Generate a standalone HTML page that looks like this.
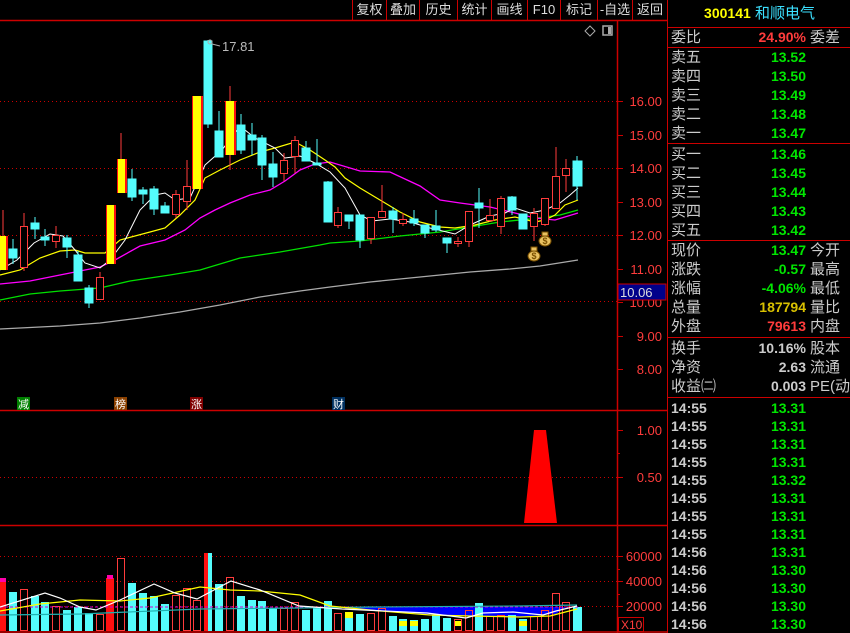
<!DOCTYPE html>
<html><head><meta charset="utf-8"><style>
*{margin:0;padding:0;box-sizing:border-box}
body{width:850px;height:633px;background:#000;overflow:hidden;position:relative;font-family:"Liberation Sans","Noto Sans CJK SC",sans-serif}
.tb{position:absolute;top:0;height:20px;border-left:1px solid #c00;color:#ddd;font-size:13px;line-height:20px;text-align:center}
.rp{position:absolute;left:667px;top:0;width:183px;height:633px;border-left:1px solid #c00}
.r{position:absolute;left:3px;width:180px;height:19px;font-size:15px;line-height:19px;color:#ccc}
.r .v{position:absolute;right:45px;top:0;font-weight:bold;font-size:14px}
.r .l2{position:absolute;left:139px;top:0}
.hl{position:absolute;left:0;width:183px;height:1px;background:#c00}
.t{position:absolute;left:3px;width:180px;height:18px;font-size:14px;line-height:18px;color:#ccc;font-weight:bold}
.t .v{position:absolute;right:45px;top:0;color:#00e600}
.g{color:#00e600}.rd{color:#ff3c3c}.y{color:#d8c000}.w{color:#ccc}
</style></head><body>
<svg width="667" height="633" style="position:absolute;left:0;top:0" xmlns="http://www.w3.org/2000/svg">
<g stroke="#c00" stroke-width="1" stroke-dasharray="1,3">
<line x1="0" y1="101.5" x2="617" y2="101.5"/><line x1="0" y1="168.5" x2="617" y2="168.5"/><line x1="0" y1="235.5" x2="617" y2="235.5"/><line x1="0" y1="301.5" x2="617" y2="301.5"/>
<line x1="0" y1="477.5" x2="617" y2="477.5"/>
<line x1="0" y1="556.5" x2="617" y2="556.5"/><line x1="0" y1="581.5" x2="617" y2="581.5"/><line x1="0" y1="606.5" x2="617" y2="606.5"/>
</g>
<g stroke="#c00" stroke-width="1.5">
<line x1="0" y1="20.5" x2="667" y2="20.5"/><line x1="0" y1="410.5" x2="667" y2="410.5"/><line x1="0" y1="525.5" x2="667" y2="525.5"/><line x1="0" y1="632" x2="667" y2="632"/>
<line x1="617.5" y1="20" x2="617.5" y2="633"/>
</g>
<g stroke="#c00">
<line x1="617" y1="101.5" x2="623" y2="101.5"/><line x1="617" y1="135.5" x2="623" y2="135.5"/><line x1="617" y1="168.5" x2="623" y2="168.5"/><line x1="617" y1="202.5" x2="623" y2="202.5"/><line x1="617" y1="235.5" x2="623" y2="235.5"/><line x1="617" y1="269.5" x2="623" y2="269.5"/><line x1="617" y1="302.5" x2="623" y2="302.5"/><line x1="617" y1="336.5" x2="623" y2="336.5"/><line x1="617" y1="369.5" x2="623" y2="369.5"/>
<line x1="617" y1="430.5" x2="623" y2="430.5"/><line x1="617" y1="453.5" x2="620" y2="453.5"/><line x1="617" y1="477.5" x2="623" y2="477.5"/>
<line x1="617" y1="556.5" x2="623" y2="556.5"/><line x1="617" y1="569.5" x2="620" y2="569.5"/><line x1="617" y1="581.5" x2="623" y2="581.5"/><line x1="617" y1="594.5" x2="620" y2="594.5"/><line x1="617" y1="606.5" x2="623" y2="606.5"/>
</g>
<g fill="#ff3c3c" font-size="13" font-family="Liberation Sans,sans-serif" text-anchor="end">
<text x="662" y="106">16.00</text><text x="662" y="140">15.00</text><text x="662" y="173">14.00</text><text x="662" y="207">13.00</text><text x="662" y="240">12.00</text><text x="662" y="274">11.00</text><text x="662" y="307">10.00</text><text x="662" y="341">9.00</text><text x="662" y="374">8.00</text>
<text x="662" y="435">1.00</text><text x="662" y="482">0.50</text>
<text x="662" y="561">60000</text><text x="662" y="586">40000</text><text x="662" y="611">20000</text>
</g>
<rect x="618" y="284" width="48" height="16" fill="#00008a" stroke="#c00"/>
<text x="620" y="297" fill="#ddd" font-size="13">10.06</text>
<rect x="618.5" y="617.5" width="25" height="14" fill="#000" stroke="#c00"/>
<text x="621" y="629" fill="#ff3c3c" font-size="12">X10</text>
<!-- icons -->
<path d="M590 26 L595 31 L590 36 L585 31 Z" fill="none" stroke="#aaa"/>
<rect x="603" y="26" width="9" height="9" fill="none" stroke="#aaa" stroke-width="1.5"/><rect x="608" y="27" width="3" height="7" fill="#aaa"/>
<!-- MA lines -->
<polyline fill="none" stroke="#aaa" stroke-width="1.3" points="0,329 60,326 100,323 140,318 180,312 220,305 260,297 300,291 330,287 370,282 420,277 470,272 510,269 540,266 578,260"/>
<polyline fill="none" stroke="#00e000" stroke-width="1.3" points="0,300 30,294 60,291 100,288 130,281 170,275 200,270 240,258 280,252 320,245 330,243 360,241 400,236 440,232 470,227 500,222 530,219 560,215 578,210"/>
<polyline fill="none" stroke="#ff00ff" stroke-width="1.3" points="0,284 30,281 55,276 75,272 100,267 115,260 140,246 165,240 185,230 200,218 215,210 230,203 250,195 270,190 285,181 300,170 315,164 330,162 360,171 390,172 420,186 440,200 460,203 490,207 515,213 535,218 555,220 578,213"/>
<polyline fill="none" stroke="#ffff00" stroke-width="1.2" points="0,275 20,270 40,258 60,251 75,250 85,253 105,253 120,240 150,232 165,228 180,215 195,200 205,178 220,170 240,160 260,152 275,148 295,142 310,150 325,160 335,167 345,178 360,188 380,200 400,212 420,222 440,227 455,228 475,225 495,220 515,217 535,222 545,220 555,215 565,205 578,200"/>
<polyline fill="none" stroke="#fff" stroke-width="1" points="0,270 17,260 34,243 50,234 63,236 75,250 85,263 100,268 110,260 125,240 140,210 155,195 165,193 175,200 190,198 205,165 222,150 240,126 255,138 275,148 285,158 300,156 315,163 330,172 345,188 360,215 372,221 390,219 410,222 430,228 455,234 470,225 490,216 505,213 515,208 530,213 545,210 560,203 570,195 578,188"/>
<!-- candles -->
<g stroke-width="1">
<g stroke="#54fcfc" fill="#54fcfc">
<line x1="13" y1="239" x2="13" y2="264"/><rect x="9" y="249" width="8" height="9"/>
<line x1="35" y1="217" x2="35" y2="239"/><rect x="31" y="223" width="8" height="6"/>
<line x1="45" y1="229" x2="45" y2="246"/><rect x="41" y="237" width="8" height="3"/>
<line x1="67" y1="235" x2="67" y2="258"/><rect x="63" y="238" width="8" height="9"/>
<line x1="78" y1="251" x2="78" y2="281"/><rect x="74" y="255" width="8" height="26"/>
<line x1="89" y1="285" x2="89" y2="308"/><rect x="85" y="288" width="8" height="15"/>
<line x1="132" y1="169" x2="132" y2="201"/><rect x="128" y="179" width="8" height="18"/>
<line x1="143" y1="187" x2="143" y2="204"/><rect x="139" y="190" width="8" height="4"/>
<line x1="154" y1="186" x2="154" y2="215"/><rect x="150" y="189" width="8" height="20"/>
<line x1="165" y1="202" x2="165" y2="213"/><rect x="161" y="206" width="8" height="7"/>
<line x1="208" y1="40" x2="208" y2="128"/><rect x="204" y="41" width="8" height="83"/>
<line x1="219" y1="111" x2="219" y2="157"/><rect x="215" y="131" width="8" height="26"/>
<line x1="241" y1="114" x2="241" y2="154"/><rect x="237" y="125" width="8" height="25"/>
<line x1="252" y1="123" x2="252" y2="155"/><rect x="248" y="135" width="8" height="5"/>
<line x1="262" y1="135" x2="262" y2="180"/><rect x="258" y="138" width="8" height="27"/>
<line x1="273" y1="152" x2="273" y2="187"/><rect x="269" y="164" width="8" height="13"/>
<line x1="306" y1="141" x2="306" y2="161"/><rect x="302" y="148" width="8" height="13"/>
<line x1="317" y1="139" x2="317" y2="165"/><rect x="313" y="163" width="8" height="2"/>
<line x1="328" y1="181" x2="328" y2="222"/><rect x="324" y="182" width="8" height="40"/>
<line x1="349" y1="215" x2="349" y2="229"/><rect x="345" y="215" width="8" height="6"/>
<line x1="360" y1="215" x2="360" y2="248"/><rect x="356" y="215" width="8" height="25"/>
<line x1="393" y1="207" x2="393" y2="233"/><rect x="389" y="211" width="8" height="8"/>
<line x1="414" y1="210" x2="414" y2="226"/><rect x="410" y="219" width="8" height="4"/>
<line x1="425" y1="225" x2="425" y2="238"/><rect x="421" y="225" width="8" height="8"/>
<line x1="436" y1="210" x2="436" y2="232"/><rect x="432" y="226" width="8" height="4"/>
<line x1="447" y1="238" x2="447" y2="253"/><rect x="443" y="238" width="8" height="5"/>
<line x1="479" y1="188" x2="479" y2="228"/><rect x="475" y="203" width="8" height="5"/>
<line x1="512" y1="196" x2="512" y2="215"/><rect x="508" y="197" width="8" height="13"/>
<rect x="519" y="214" width="8" height="15"/>
<line x1="577" y1="156" x2="577" y2="200"/><rect x="573" y="161" width="9" height="25"/>
</g>
<g stroke="#ff3c3c" fill="#000">
<line x1="24" y1="213" x2="24" y2="271"/><rect x="20.5" y="226.5" width="7" height="41"/>
<line x1="56" y1="226" x2="56" y2="248"/><rect x="52.5" y="235.5" width="7" height="6"/>
<line x1="100" y1="272" x2="100" y2="299"/><rect x="96.5" y="277.5" width="7" height="22"/>
<line x1="176" y1="190" x2="176" y2="218"/><rect x="172.5" y="194.5" width="7" height="20"/>
<line x1="187" y1="160" x2="187" y2="210"/><rect x="183.5" y="186.5" width="7" height="15"/>
<line x1="284" y1="153" x2="284" y2="181"/><rect x="280.5" y="160.5" width="7" height="13"/>
<line x1="295" y1="136" x2="295" y2="173"/><rect x="291.5" y="140.5" width="7" height="16"/>
<line x1="338" y1="207" x2="338" y2="228"/><rect x="334.5" y="212.5" width="7" height="13"/>
<line x1="371" y1="217" x2="371" y2="244"/><rect x="367.5" y="217.5" width="7" height="21"/>
<line x1="382" y1="185" x2="382" y2="217"/><rect x="378.5" y="211.5" width="7" height="6"/>
<line x1="403" y1="213" x2="403" y2="226"/><rect x="399.5" y="219.5" width="7" height="4"/>
<line x1="458" y1="237" x2="458" y2="247"/><rect x="454.5" y="241.5" width="7" height="2"/>
<line x1="469" y1="211" x2="469" y2="247"/><rect x="465.5" y="211.5" width="7" height="30"/>
<line x1="490" y1="199" x2="490" y2="222"/><rect x="486.5" y="215.5" width="7" height="5"/>
<line x1="501" y1="196" x2="501" y2="234"/><rect x="497.5" y="198.5" width="7" height="28"/>
<line x1="534" y1="208" x2="534" y2="241"/><rect x="530.5" y="213.5" width="7" height="13"/>
<line x1="545" y1="198" x2="545" y2="226"/><rect x="541.5" y="198.5" width="7" height="26"/>
<line x1="556" y1="147" x2="556" y2="208"/><rect x="552.5" y="176.5" width="7" height="32"/>
<line x1="566" y1="159" x2="566" y2="192"/><rect x="562.5" y="168.5" width="7" height="7"/>
</g>
<line x1="3" y1="210" x2="3" y2="236" stroke="#ff3c3c"/>
<line x1="121" y1="133" x2="121" y2="159" stroke="#ff3c3c"/>
<line x1="230" y1="86" x2="230" y2="101" stroke="#ff3c3c"/><line x1="230" y1="155" x2="230" y2="170" stroke="#ff3c3c"/>
<g fill="#ff1010"><rect x="-2" y="236" width="10" height="34"/><rect x="106" y="205" width="10" height="59"/><rect x="117" y="159" width="10" height="34"/><rect x="192" y="96" width="11" height="93"/><rect x="225" y="101" width="11" height="54"/></g>
<g fill="#ffff00"><rect x="-1" y="236" width="7" height="34"/><rect x="107" y="205" width="7" height="59"/><rect x="118" y="159" width="7" height="34"/><rect x="193" y="96" width="8" height="93"/><rect x="226" y="101" width="8" height="54"/></g>
</g>
<circle cx="210" cy="42" r="2" fill="none" stroke="#aaa"/><line x1="212" y1="44" x2="220" y2="46" stroke="#aaa"/>
<text x="222" y="51" fill="#bbb" font-size="13">17.81</text>
<!-- money bags -->
<g font-size="9" text-anchor="middle" font-weight="bold">
<ellipse cx="534" cy="256" rx="6" ry="5" fill="#e8c060" stroke="#7a5000"/><rect x="531" y="247" width="6" height="4" fill="#e8c060" stroke="#7a5000"/><text x="534" y="259" fill="#7a5000">$</text>
<ellipse cx="545" cy="241" rx="6" ry="5" fill="#e8c060" stroke="#7a5000"/><rect x="542" y="232" width="6" height="4" fill="#e8c060" stroke="#7a5000"/><text x="545" y="244" fill="#7a5000">$</text>
</g>
<!-- event tags -->
<g font-size="11" font-family="Noto Sans CJK SC,sans-serif" fill="#fff">
<rect x="17" y="397" width="13" height="13" fill="#008000"/><text x="18" y="408">减</text>
<rect x="114" y="397" width="13" height="13" fill="#8a4000"/><text x="115" y="408">榜</text>
<rect x="190" y="397" width="13" height="13" fill="#800000"/><text x="191" y="408">涨</text>
<rect x="332" y="397" width="13" height="13" fill="#003060"/><text x="333" y="408">财</text>
</g>
<path d="M524 523 L534 430 L546 430 L557 523 Z" fill="#ff0000"/>
<!-- volume -->
<polygon points="345,607 566,607 556,614 520,617 470,616 430,615 380,611 345,609" fill="#0000ff"/>
<g fill="#54fcfc">
<rect x="9" y="592" width="8" height="39"/><rect x="31" y="596" width="8" height="35"/><rect x="41" y="602" width="8" height="29"/><rect x="63" y="610" width="8" height="21"/><rect x="74" y="607" width="8" height="24"/><rect x="85" y="613" width="8" height="18"/><rect x="128" y="583" width="8" height="48"/><rect x="139" y="593" width="8" height="38"/><rect x="150" y="596" width="8" height="35"/><rect x="161" y="604" width="8" height="27"/><rect x="208" y="553" width="4" height="78"/><rect x="215" y="584" width="8" height="47"/><rect x="237" y="596" width="8" height="35"/><rect x="248" y="600" width="8" height="31"/><rect x="258" y="601" width="8" height="30"/><rect x="269" y="608" width="8" height="23"/><rect x="302" y="610" width="8" height="21"/><rect x="313" y="608" width="8" height="23"/><rect x="324" y="601" width="8" height="30"/><rect x="345" y="617" width="8" height="14"/><rect x="356" y="614" width="8" height="17"/><rect x="389" y="616" width="8" height="15"/><rect x="399" y="619" width="8" height="12"/><rect x="410" y="620" width="8" height="11"/><rect x="421" y="619" width="8" height="12"/><rect x="432" y="615" width="8" height="16"/><rect x="443" y="618" width="8" height="13"/><rect x="475" y="603" width="8" height="28"/><rect x="508" y="615" width="8" height="16"/><rect x="519" y="619" width="8" height="12"/><rect x="573" y="607" width="9" height="24"/>
</g>
<g fill="#ffff00"><rect x="345" y="612" width="8" height="6"/><rect x="399" y="621" width="8" height="5"/><rect x="410" y="621" width="8" height="5"/><rect x="454" y="621" width="8" height="5"/><rect x="519" y="621" width="8" height="5"/></g>
<g fill="none" stroke="#ff3c3c">
<rect x="20.5" y="589.5" width="7" height="41"/><rect x="52.5" y="606.5" width="7" height="24"/><rect x="96.5" y="614.5" width="7" height="16"/><rect x="117.5" y="558.5" width="7" height="72"/><rect x="172.5" y="595.5" width="7" height="35"/><rect x="183.5" y="588.5" width="7" height="42"/><rect x="193.5" y="600.5" width="7" height="30"/><rect x="226.5" y="577.5" width="7" height="53"/><rect x="280.5" y="608.5" width="7" height="22"/><rect x="291.5" y="602.5" width="7" height="28"/><rect x="334.5" y="613.5" width="7" height="17"/><rect x="367.5" y="613.5" width="7" height="17"/><rect x="378.5" y="608.5" width="7" height="22"/><rect x="454.5" y="619.5" width="7" height="11"/><rect x="465.5" y="610.5" width="7" height="20"/><rect x="486.5" y="616.5" width="7" height="14"/><rect x="497.5" y="615.5" width="7" height="15"/><rect x="530.5" y="616.5" width="7" height="14"/><rect x="541.5" y="610.5" width="7" height="20"/><rect x="552.5" y="593.5" width="7" height="37"/><rect x="562.5" y="602.5" width="7" height="28"/>
</g>
<g fill="#ff1010"><rect x="0" y="579" width="6" height="52"/><rect x="106" y="578" width="8" height="53"/><rect x="204" y="553" width="4" height="78"/></g>
<g fill="#ff00aa"><rect x="0" y="578" width="6" height="4"/><rect x="107" y="575" width="6" height="4"/></g>
<line x1="0" y1="607" x2="578" y2="607" stroke="#d000d0" stroke-dasharray="3,2"/>
<polyline fill="none" stroke="#20b0b0" stroke-width="1.2" points="0,615 80,614 200,609 300,608 370,607 520,606 577,605"/>
<polyline fill="none" stroke="#ffff00" stroke-width="1.2" points="0,611 40,604 80,600 120,601 150,598 200,587 230,590 260,591 300,595 330,606 380,611 430,615 470,616 520,617 550,616 577,609"/>
<polyline fill="none" stroke="#fff" stroke-width="1.2" points="0,607 45,593 60,598 80,607 96,610 120,600 154,584 175,593 197,599 231,581 260,590 299,606 342,609 427,613 466,618 483,613 513,612 543,615 556,611 577,606"/>
</svg>
<!-- toolbar -->
<div class="tb" style="left:352px;width:34px">复权</div>
<div class="tb" style="left:386px;width:33px">叠加</div>
<div class="tb" style="left:419px;width:38px">历史</div>
<div class="tb" style="left:457px;width:34px">统计</div>
<div class="tb" style="left:491px;width:36px">画线</div>
<div class="tb" style="left:527px;width:33px">F10</div>
<div class="tb" style="left:560px;width:37px">标记</div>
<div class="tb" style="left:597px;width:35px">-自选</div>
<div class="tb" style="left:632px;width:35px">返回</div>
<!-- right panel -->
<div class="rp">
<div style="position:absolute;left:0;top:3px;width:183px;text-align:center;font-size:15px;line-height:20px"><b style="color:#ff0;font-size:14px">300141</b> <span style="color:#3ce0ff">和顺电气</span></div>
<div class="hl" style="top:27px"></div>
<div class="r" style="top:28px">委比<span class="v rd">24.90%</span><span class="l2">委差</span></div>
<div class="hl" style="top:47px"></div>
<div class="r" style="top:48px">卖五<span class="v g">13.52</span></div>
<div class="r" style="top:67px">卖四<span class="v g">13.50</span></div>
<div class="r" style="top:86px">卖三<span class="v g">13.49</span></div>
<div class="r" style="top:105px">卖二<span class="v g">13.48</span></div>
<div class="r" style="top:124px">卖一<span class="v g">13.47</span></div>
<div class="hl" style="top:143px"></div>
<div class="r" style="top:145px">买一<span class="v g">13.46</span></div>
<div class="r" style="top:164px">买二<span class="v g">13.45</span></div>
<div class="r" style="top:183px">买三<span class="v g">13.44</span></div>
<div class="r" style="top:202px">买四<span class="v g">13.43</span></div>
<div class="r" style="top:221px">买五<span class="v g">13.42</span></div>
<div class="hl" style="top:240px"></div>
<div class="r" style="top:241px">现价<span class="v g">13.47</span><span class="l2">今开</span></div>
<div class="r" style="top:260px">涨跌<span class="v g">-0.57</span><span class="l2">最高</span></div>
<div class="r" style="top:279px">涨幅<span class="v g">-4.06%</span><span class="l2">最低</span></div>
<div class="r" style="top:298px">总量<span class="v y">187794</span><span class="l2">量比</span></div>
<div class="r" style="top:317px">外盘<span class="v rd">79613</span><span class="l2">内盘</span></div>
<div class="hl" style="top:337px"></div>
<div class="r" style="top:339px">换手<span class="v w">10.16%</span><span class="l2">股本</span></div>
<div class="r" style="top:358px">净资<span class="v w">2.63</span><span class="l2">流通</span></div>
<div class="r" style="top:377px">收益㈡<span class="v w">0.003</span><span class="l2">PE(动)</span></div>
<div class="hl" style="top:397px"></div>
<div class="t" style="top:399px">14:55<span class="v">13.31</span></div>
<div class="t" style="top:417px">14:55<span class="v">13.31</span></div>
<div class="t" style="top:435px">14:55<span class="v">13.31</span></div>
<div class="t" style="top:453px">14:55<span class="v">13.31</span></div>
<div class="t" style="top:471px">14:55<span class="v">13.32</span></div>
<div class="t" style="top:489px">14:55<span class="v">13.31</span></div>
<div class="t" style="top:507px">14:55<span class="v">13.31</span></div>
<div class="t" style="top:525px">14:55<span class="v">13.31</span></div>
<div class="t" style="top:543px">14:56<span class="v">13.31</span></div>
<div class="t" style="top:561px">14:56<span class="v">13.30</span></div>
<div class="t" style="top:579px">14:56<span class="v">13.30</span></div>
<div class="t" style="top:597px">14:56<span class="v">13.30</span></div>
<div class="t" style="top:615px">14:56<span class="v">13.30</span></div>
</div>
</body></html>
